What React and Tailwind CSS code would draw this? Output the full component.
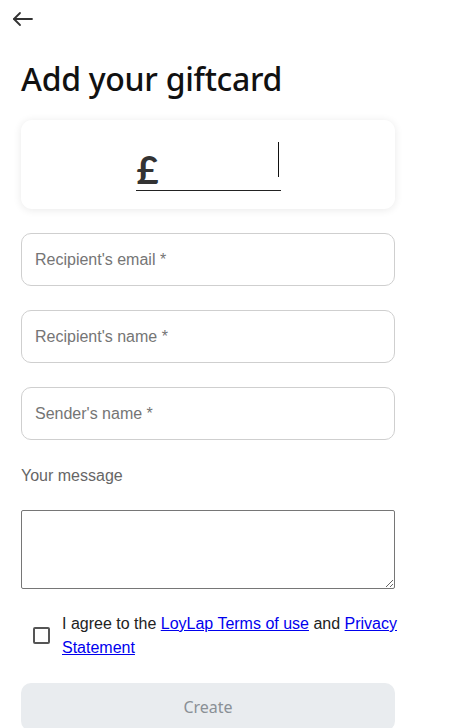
import React, { useState } from "react";

export default function App() {
  const [agree, setAgree] = useState(false);

  const field =
    "block w-full h-[53px] rounded-[10px] border border-[#cfcfcf] bg-white px-[13px] text-[16px] text-[#333] placeholder-[#757575] outline-none";

  return (
    <div className="min-h-screen bg-white" style={{ fontFamily: '"Liberation Sans", Arial, sans-serif' }}>
      <div className="w-[374px] ml-[21px]">
        {/* Back */}
        <button className="-ml-[9px] mt-[9px] h-[20px] w-[24px] flex items-center text-[#333]">
          <svg width="22" height="16" viewBox="0 0 22 16" fill="none" stroke="currentColor" strokeWidth="1.8" strokeLinecap="round" strokeLinejoin="round">
            <path d="M20 8H2" />
            <path d="M8 2L2 8l6 6" />
          </svg>
        </button>

        <h1
          className="mt-[30px] text-[32px] leading-[40px] font-medium text-[#111] tracking-[-0.3px]"
          style={{ fontFamily: '"Noto Sans", Lato, sans-serif' }}
        >
          Add your giftcard
        </h1>

        {/* Amount card */}
        <div className="mt-[21px] h-[89px] rounded-[11px] bg-white shadow-[0_1px_8px_rgba(0,0,0,0.09)] flex items-center justify-center">
          <div className="relative mt-[9px] w-[145px] h-[44px] border-b border-[#222] flex items-center">
            <span className="ml-[1px] text-[38px] leading-none font-bold text-[#333]" style={{ fontFamily: 'Lato, sans-serif' }}>
              £
            </span>
            <span className="absolute right-[2px] top-[-5px] w-px h-[35px] bg-[#111]" />
          </div>
        </div>

        {/* Fields */}
        <div className="mt-[24px] flex flex-col gap-[24px]">
          <input className={field} placeholder="Recipient's email *" />
          <input className={field} placeholder="Recipient's name *" />
          <input className={field} placeholder="Sender's name *" />
        </div>

        <label className="block mt-[26px] text-[16px] leading-[20px] text-[#666]">Your message</label>
        <textarea className="block mt-[24px] w-full h-[79px] border border-[#767676] rounded-[2px] outline-none" />

        {/* Agree */}
        <div className="mt-[23px] flex items-start">
          <button
            onClick={() => setAgree(!agree)}
            className="mt-[15px] ml-[12px] w-[17px] h-[17px] shrink-0 rounded-[2px] border-2 border-[#555] bg-white"
          />
          <p className="ml-[12px] -mr-[20px] text-[16px] leading-[24px] text-[#222]">
            I agree to the <a href="#" className="text-[#0000ee] underline">LoyLap Terms of use</a> and{" "}
            <a href="#" className="text-[#0000ee] underline">Privacy</a>{" "}
            <br />
            <a href="#" className="text-[#0000ee] underline">Statement</a>
          </p>
        </div>

        <button
          className="mt-[23px] w-full h-[48px] rounded-[10px] bg-[#e9ecef] text-[16px] text-[#8a9096]"
          style={{ fontFamily: '"Noto Sans", Lato, sans-serif' }}
        >
          Create
        </button>
      </div>
    </div>
  );
}
